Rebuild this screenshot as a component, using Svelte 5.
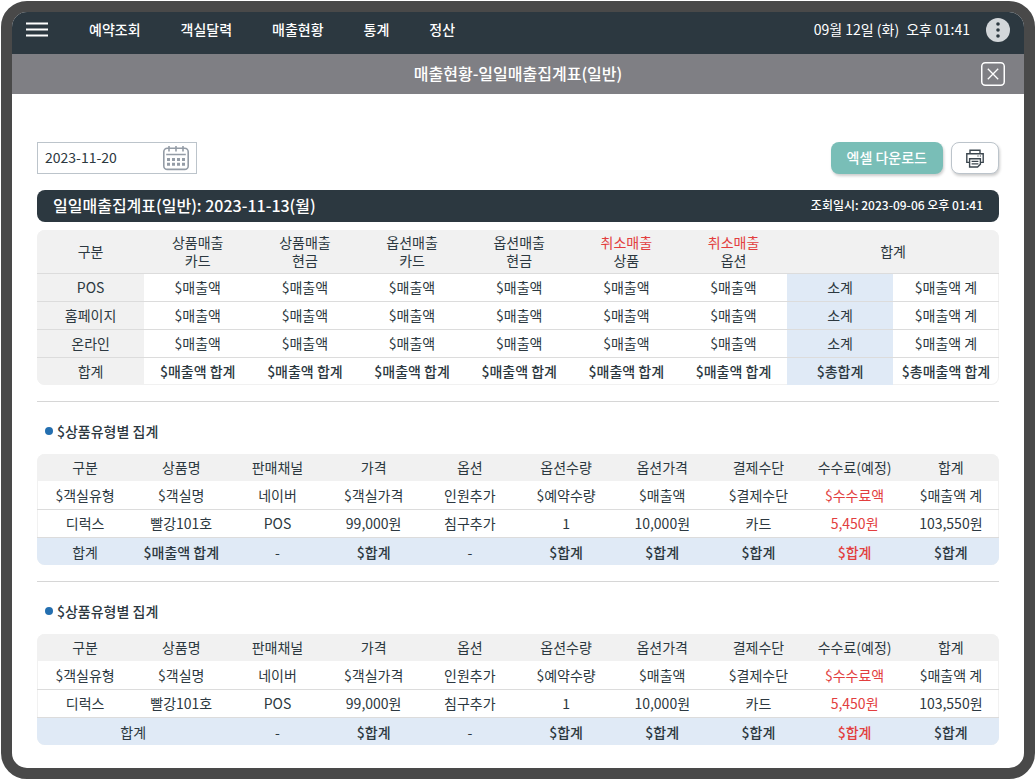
<script lang="ts">
	interface Cell {
		text: string
		bold?: boolean
		red?: boolean
		span?: number
	}

	const menu = ['예약조회', '객실달력', '매출현황', '통계', '정산']

	let date = $state('2023-11-20')

	const dailyHead = [
		{ top: '상품매출', bottom: '카드' },
		{ top: '상품매출', bottom: '현금' },
		{ top: '옵션매출', bottom: '카드' },
		{ top: '옵션매출', bottom: '현금' },
		{ top: '취소매출', bottom: '상품', cancel: true },
		{ top: '취소매출', bottom: '옵션', cancel: true },
	]
	const channels = ['POS', '홈페이지', '온라인']

	const typeHead = ['구분', '상품명', '판매채널', '가격', '옵션', '옵션수량', '옵션가격', '결제수단', '수수료(예정)', '합계']
	const typeRows = [
		['$객실유형', '$객실명', '네이버', '$객실가격', '인원추가', '$예약수량', '$매출액', '$결제수단', '$수수료액', '$매출액 계'],
		['디럭스', '빨강101호', 'POS', '99,000원', '침구추가', '1', '10,000원', '카드', '5,450원', '103,550원'],
	]

	const totals: Cell[] = [
		{ text: '-' },
		{ text: '$합계', bold: true },
		{ text: '-' },
		{ text: '$합계', bold: true },
		{ text: '$합계', bold: true },
		{ text: '$합계', bold: true },
		{ text: '$합계', bold: true, red: true },
		{ text: '$합계', bold: true },
	]

	const sections: { title: string; foot: Cell[] }[] = [
		{ title: '$상품유형별 집계', foot: [{ text: '합계' }, { text: '$매출액 합계', bold: true }, ...totals] },
		{ title: '$상품유형별 집계', foot: [{ text: '합계', span: 2 }, ...totals] },
	]
</script>

<div class="page">
	<div class="device">
		<header class="topbar">
			<button class="icon-btn" aria-label="메뉴">
				<svg width="22" height="15" viewBox="0 0 22 15" stroke="#fff" stroke-width="2">
					<path d="M0 1.5h22M0 7.5h22M0 13.5h22" />
				</svg>
			</button>
			<nav>
				{#each menu as item}
					<a href="#{item}">{item}</a>
				{/each}
			</nav>
			<div class="clock">
				<span>09월 12일 (화)</span>
				<span>오후 01:41</span>
			</div>
			<button class="icon-btn" aria-label="더보기">
				<svg width="24" height="24" viewBox="0 0 24 24">
					<circle cx="12" cy="12" r="12" fill="#d3d7da" />
					<g fill="#2c3840">
						<circle cx="12" cy="6" r="1.8" />
						<circle cx="12" cy="12" r="1.8" />
						<circle cx="12" cy="18" r="1.8" />
					</g>
				</svg>
			</button>
		</header>

		<div class="titlebar">
			<h1>매출현황-일일매출집계표(일반)</h1>
			<button class="icon-btn" aria-label="닫기">
				<svg width="24" height="24" viewBox="0 0 24 24" fill="none" stroke="#fff">
					<rect x="0.75" y="0.75" width="22.5" height="22.5" rx="3.5" stroke-width="1.5" />
					<path d="M6.8 6.8l10.4 10.4M17.2 6.8L6.8 17.2" stroke-width="1.3" />
				</svg>
			</button>
		</div>

		<main>
			<div class="toolbar">
				<div class="date-field">
					<input type="text" aria-label="조회일" bind:value={date} />
					<button class="icon-btn" aria-label="달력 열기">
						<svg width="26" height="26" viewBox="0 0 26 26" fill="none" stroke="#949ca6">
							<rect x="0.8" y="3.2" width="24.4" height="21.2" rx="3.5" stroke-width="1.6" />
							<path d="M6 1v5.5M13 1v5.5M20 1v5.5" stroke-width="1.6" />
							<path d="M3.2 9.5h19.6" stroke-width="1.4" />
							<path d="M4 14.5h18M4 19.3h18" stroke-width="3" stroke-dasharray="3 2" />
						</svg>
					</button>
				</div>
				<button class="excel">엑셀 다운로드</button>
				<button class="print" aria-label="인쇄">
					<svg width="18" height="19" viewBox="0 0 18 19" fill="none" stroke="#3b464e" stroke-width="1.4">
						<path d="M4 4.6V1.2h10v3.4" />
						<path d="M3.6 13.4H0.8V4.8h16.4v8.6h-2.8" />
						<path d="M3.6 9.8h10.8v5.4l-2.8 2.8H3.6z" />
						<path d="M5.6 12.4h6.8M5.6 14.9h6.8" stroke-width="1.2" />
						<path d="M11.4 7h1.2M13.8 7h1.2" stroke-width="1.2" />
					</svg>
				</button>
			</div>

			<div class="report-title">
				<h2>일일매출집계표(일반): 2023-11-13(월)</h2>
				<span>조회일시: 2023-09-06 오후 01:41</span>
			</div>

			<div class="table-box">
				<table class="daily">
					<thead>
						<tr>
							<th scope="col">구분</th>
							{#each dailyHead as col}
								<th scope="col"><span class:red={col.cancel}>{col.top}</span><br />{col.bottom}</th>
							{/each}
							<th scope="colgroup" colspan="2">합계</th>
						</tr>
					</thead>
					<tbody>
						{#each channels as channel}
							<tr>
								<th scope="row">{channel}</th>
								{#each dailyHead as _}
									<td>$매출액</td>
								{/each}
								<td class="subtotal">소계</td>
								<td>$매출액 계</td>
							</tr>
						{/each}
						<tr class="bold">
							<th scope="row">합계</th>
							{#each dailyHead as _}
								<td>$매출액 합계</td>
							{/each}
							<td class="subtotal">$총합계</td>
							<td>$총매출액 합계</td>
						</tr>
					</tbody>
				</table>
			</div>

			{#each sections as section}
				<section>
					<h3>{section.title}</h3>
					<div class="table-box">
						<table class="by-type">
							<thead>
								<tr>
									{#each typeHead as name}
										<th scope="col">{name}</th>
									{/each}
								</tr>
							</thead>
							<tbody>
								{#each typeRows as row}
									<tr>
										{#each row as value, i}
											<td class:red={i === 8}>{value}</td>
										{/each}
									</tr>
								{/each}
							</tbody>
							<tfoot>
								<tr>
									{#each section.foot as cell}
										<td class:bold={cell.bold} class:red={cell.red} colspan={cell.span ?? 1}>{cell.text}</td>
									{/each}
								</tr>
							</tfoot>
						</table>
					</div>
				</section>
			{/each}
		</main>
	</div>
</div>

<style>
	:global(body) {
		background: #fff;
	}

	.page,
	.page * {
		box-sizing: border-box;
	}

	.page {
		display: flex;
		min-height: 100vh;
		padding: 1px;
		font-family: 'Noto Sans CJK KR', 'Noto Sans', sans-serif;
		font-size: 14px;
		line-height: 18px;
		color: #2c3840;
	}

	.device {
		flex: 1;
		min-width: 0;
		border: 11px solid #494949;
		border-radius: 26px;
		overflow: hidden;
	}

	button,
	input {
		font: inherit;
		color: inherit;
	}

	.icon-btn {
		display: flex;
		padding: 0;
		border: none;
		background: none;
		cursor: pointer;
	}

	h1,
	h2,
	h3 {
		margin: 0;
		font-weight: 500;
	}

	.topbar {
		display: flex;
		align-items: center;
		height: 42px;
		padding: 0 14px 7px;
		background: #2c3840;
		color: #fff;
	}

	nav {
		display: flex;
		flex: 1;
		gap: 40px;
		margin-left: 41px;
		padding-bottom: 2px;
	}

	nav a {
		color: inherit;
		font-weight: 500;
		text-decoration: none;
	}

	.clock {
		display: flex;
		gap: 7px;
		margin-right: 16px;
		padding-bottom: 2px;
	}

	.titlebar {
		display: grid;
		grid-template-columns: 1fr auto 1fr;
		align-items: center;
		height: 40px;
		padding: 0 19px;
		background: #7f7f84;
		color: #fff;
	}

	.titlebar h1 {
		grid-column: 2;
		padding-bottom: 2px;
		font-size: 16px;
	}

	.titlebar button {
		justify-self: end;
	}

	main {
		padding: 48px 25px 23px;
	}

	.toolbar {
		display: flex;
		gap: 8px;
		height: 32px;
	}

	.date-field {
		display: flex;
		align-items: center;
		width: 160px;
		margin-right: auto;
		padding: 0 7px;
		border: 1px solid #bcc4cb;
	}

	.date-field input {
		flex: 1;
		min-width: 0;
		padding: 0 0 2px;
		border: none;
		outline: none;
		background: none;
	}

	.excel,
	.print {
		border-radius: 8px;
		box-shadow: 1px 2px 3px rgba(0, 0, 0, 0.2);
		cursor: pointer;
	}

	.excel {
		padding: 0 16px 2px;
		border: none;
		background: #79beb7;
		color: #fff;
		font-weight: 500;
	}

	.print {
		display: flex;
		align-items: center;
		justify-content: center;
		width: 48px;
		padding: 0;
		border: 1px solid #bcc4cb;
		background: #fff;
	}

	.report-title {
		display: flex;
		align-items: center;
		justify-content: space-between;
		height: 32px;
		margin: 16px 0 8px;
		padding: 0 16px 2px;
		border-radius: 8px;
		background: #2c3840;
		color: #fff;
	}

	.report-title h2 {
		font-size: 16px;
	}

	.report-title span {
		font-size: 12px;
		font-weight: 500;
	}

	.table-box {
		border-radius: 8px;
		box-shadow: inset 0 0 0 1px #f1f1f1;
		overflow: hidden;
	}

	table {
		width: 100%;
		table-layout: fixed;
		border-collapse: separate;
		border-spacing: 0;
	}

	th,
	td {
		height: 28px;
		padding: 0 0 2px;
		border-bottom: 1px solid #dcdcdc;
		font-weight: 400;
		text-align: center;
		white-space: nowrap;
	}

	th {
		background: #f1f1f1;
	}

	thead th {
		height: 27px;
		border-bottom: none;
	}

	.daily thead th {
		height: 44px;
		border-bottom: 1px solid #dcdcdc;
	}

	.daily thead th:not(:last-child) {
		width: 11.14%;
	}

	.daily tbody tr:last-child > * {
		height: 27px;
		border-bottom: none;
	}

	.by-type tbody tr:first-child td {
		height: 29px;
		padding-bottom: 1px;
	}

	tfoot td {
		height: 27px;
		padding-bottom: 0;
		border-bottom: none;
	}

	.subtotal,
	tfoot td {
		background: #e0eaf6;
	}

	.bold td,
	td.bold {
		font-weight: 500;
	}

	.red {
		color: #e23e3e;
	}

	section {
		margin-top: 16px;
		border-top: 1px solid #d6d6d6;
	}

	h3 {
		display: flex;
		align-items: center;
		gap: 4px;
		height: 52px;
		padding: 6px 8px 0;
		font-size: 14px;
	}

	h3::before {
		content: '';
		width: 8px;
		height: 8px;
		border-radius: 50%;
		background: #246fb0;
	}
</style>
